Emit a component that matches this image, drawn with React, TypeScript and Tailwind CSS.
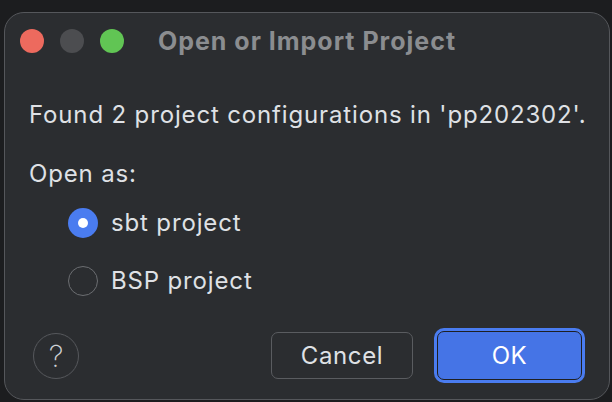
import React, { useState } from 'react';

type Choice = 'sbt' | 'bsp';

const OPTIONS: { id: Choice; label: string }[] = [
  { id: 'sbt', label: 'sbt project' },
  { id: 'bsp', label: 'BSP project' },
];

const Radio: React.FC<{ checked: boolean; label: string; onSelect: () => void }> = ({ checked, label, onSelect }) => (
  <button onClick={onSelect} className="flex items-center gap-[13px] h-[30px] text-left">
    {checked ? (
      <span className="w-[30px] h-[30px] rounded-full bg-[#4a7cf0] flex items-center justify-center">
        <span className="w-[10px] h-[10px] rounded-full bg-white"></span>
      </span>
    ) : (
      <span className="w-[30px] h-[30px] rounded-full border-[1.5px] border-[#6b6d71]"></span>
    )}
    <span className="text-[24px] leading-[28px] tracking-[0.85px] text-[#dfe1e5]">{label}</span>
  </button>
);

const App: React.FC = () => {
  const [choice, setChoice] = useState<Choice>('sbt');

  return (
    <div
      className="w-[612px] h-[402px] bg-[#1c1d1f] pt-[12px] pl-[4px] overflow-hidden"
      style={{ fontFamily: 'Inter, "Noto Sans", sans-serif' }}
    >
      <div className="w-[606px] h-[388px] rounded-[20px] border border-[#55575b] bg-[#2b2d30] flex flex-col">
        {/* Title bar */}
        <div className="h-[55px] shrink-0 grid grid-cols-[1fr_auto_1fr] items-center">
          <div className="flex items-center gap-[16px] pl-[15px]">
            <span className="w-[24px] h-[24px] rounded-full bg-[#ed6a5e]"></span>
            <span className="w-[24px] h-[24px] rounded-full bg-[#4c4d50]"></span>
            <span className="w-[24px] h-[24px] rounded-full bg-[#61c554]"></span>
          </div>
          <h1 className="text-[25px] leading-[28px] font-bold tracking-[1px] whitespace-nowrap text-[#8b8d90]">
            Open or Import Project
          </h1>
          <div></div>
        </div>

        <div className="pl-[24px] pr-[20px] flex flex-col">
          <p className="mt-[33px] text-[24px] leading-[28px] tracking-[0.85px] whitespace-nowrap text-[#dfe1e5]">
            Found 2 project configurations in 'pp202302'.
          </p>
          <p className="mt-[31px] text-[24px] leading-[28px] tracking-[0.85px] text-[#dfe1e5]">Open as:</p>

          <div className="mt-[20px] pl-[39px] flex flex-col gap-[28px]">
            {OPTIONS.map((o) => (
              <Radio key={o.id} checked={choice === o.id} label={o.label} onSelect={() => setChoice(o.id)} />
            ))}
          </div>

          {/* Footer */}
          <div className="mt-[32px] pr-[4px] flex items-center">
            <button className="ml-[4px] w-[46px] h-[46px] rounded-full border-[1.5px] border-[#56585c] flex items-center justify-center text-[30px] leading-none font-extralight text-[#cfd1d5]">
              ?
            </button>
            <div className="ml-auto flex items-center gap-[21px]">
              <button className="w-[142px] h-[47px] rounded-[7px] border-[1.5px] border-[#5a5c60] text-[24px] tracking-[0.6px] text-[#dfe1e5]">
                Cancel
              </button>
              <div className="w-[151px] h-[55px] rounded-[10px] bg-[#4a7cf0] p-[3px]">
                <button className="w-full h-full rounded-[7px] border-[1.5px] border-[#1e1f22] bg-[#4574e6] text-[24px] tracking-[0.6px] text-white">
                  OK
                </button>
              </div>
            </div>
          </div>
        </div>
      </div>
    </div>
  );
};

export default App;
